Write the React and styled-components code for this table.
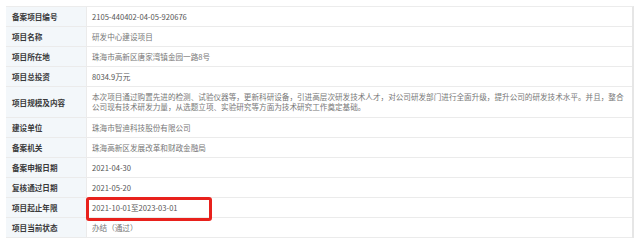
import React from 'react'
import styled, { createGlobalStyle } from 'styled-components'

const rows = [
  { label: '备案项目编号', value: '2105-440402-04-05-920676', dark: true },
  { label: '项目名称', value: '研发中心建设项目' },
  { label: '项目所在地', value: '珠海市高新区唐家湾镇金园一路8号' },
  { label: '项目总投资', value: '8034.9万元', dark: true },
  {
    label: '项目规模及内容',
    value:
      '本次项目通过购置先进的检测、试验仪器等，更新科研设备，引进高层次研发技术人才，对公司研发部门进行全面升级，提升公司的研发技术水平。并且，整合公司现有技术研发力量，从选题立项、实验研究等方面为技术研究工作奠定基础。',
    tall: true,
  },
  { label: '建设单位', value: '珠海市智迪科技股份有限公司' },
  { label: '备案机关', value: '珠海高新区发展改革和财政金融局' },
  { label: '备案申报日期', value: '2021-04-30', dark: true },
  { label: '复核通过日期', value: '2021-05-20', dark: true },
  { label: '项目起止年限', value: '2021-10-01至2023-03-01', dark: true, marked: true },
  { label: '项目当前状态', value: '办结（通过）' },
]

const App = () => {
  return (
    <>
      <GlobalStyle />
      <Page>
        <Table>
          {rows.map((r) => (
            <Row key={r.label} $tall={r.tall}>
              <Label>{r.label}</Label>
              <Value $dark={r.dark}>
                {r.value}
                {r.marked && <Highlight />}
              </Value>
            </Row>
          ))}
        </Table>
      </Page>
    </>
  )
}

export default App

const GlobalStyle = createGlobalStyle`
  body {
    margin: 0;
    background: #fff;
    font-family: "Noto Sans CJK SC", "Noto Sans", sans-serif;
  }
`

const Page = styled.div`
  width: 640px;
  height: 246px;
  padding: 6px 6px 0 6px;
  box-sizing: border-box;
`

const Table = styled.div`
  width: 628px;
  border-top: 1px solid #ececec;
  border-right: 2px solid #e6e6e6;
  box-sizing: border-box;
`

const Row = styled.div`
  display: grid;
  grid-template-columns: 81px 1fr;
  height: ${(p) => (p.$tall ? '31px' : '20px')};
  border-bottom: 1px solid #ebebeb;
  box-sizing: border-box;
`

const Label = styled.div`
  display: flex;
  align-items: center;
  padding-left: 6px;
  background: #f3f7fa;
  border-right: 1px solid #ebebeb;
  font-size: 7.6px;
  font-weight: 700;
  color: #3a3a3a;
`

const Value = styled.div`
  position: relative;
  display: flex;
  align-items: center;
  padding: 0 6px 0 5px;
  font-size: 7.6px;
  line-height: 9.6px;
  color: ${(p) => (p.$dark ? '#555' : '#777')};
`

const Highlight = styled.div`
  position: absolute;
  left: -1px;
  top: -1px;
  width: 126px;
  height: 24px;
  border: 3px solid #e8211c;
  border-radius: 3px;
  box-sizing: border-box;
`
